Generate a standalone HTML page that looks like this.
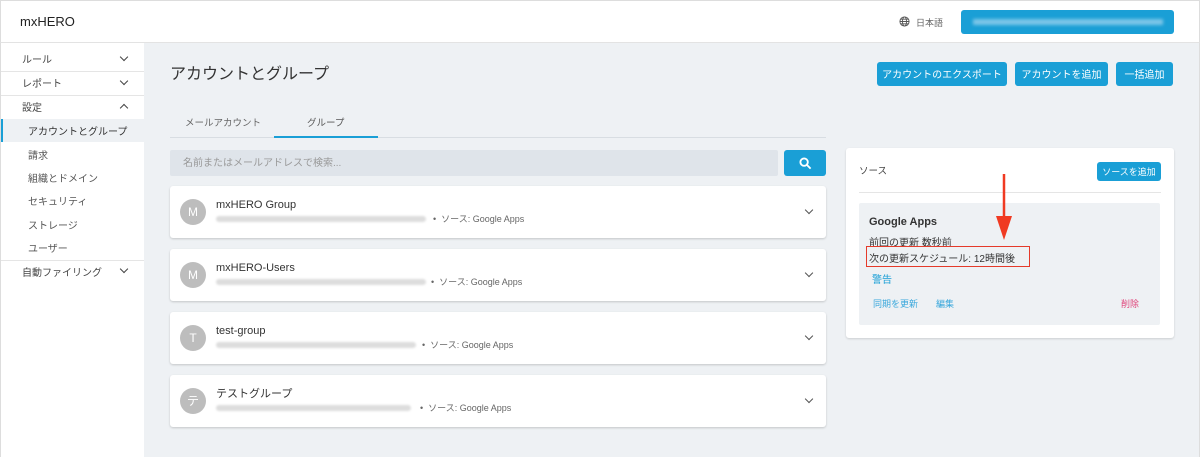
<!DOCTYPE html><html><head><meta charset="utf-8"><style>
*{box-sizing:border-box;margin:0;padding:0}
body{width:1200px;height:457px;overflow:hidden;font-family:"Liberation Sans","Noto Sans CJK JP",sans-serif;background:#fff;position:relative;color:#333}
.abs{position:absolute}
.hdr{left:0;top:0;width:1200px;height:43px;border:1px solid #ddd;border-bottom:1px solid #e3e3e3;background:#fff}
.side{left:0;top:43px;width:144px;height:414px;background:#fff;border-left:1px solid #ddd}
.main{left:144px;top:43px;width:1056px;height:414px;background:#eef1f4;border-right:1px solid #ddd}
.si{position:absolute;left:21px;font-size:10px;color:#444;line-height:12px}
.sub{position:absolute;left:27px;font-size:10px;color:#555;line-height:12px}
.chev{position:absolute;left:120px;width:6px;height:6px;border-right:1.5px solid #444;border-bottom:1.5px solid #444;transform:rotate(45deg)}
.sep{position:absolute;left:0;width:144px;height:1px;background:#e5e5e5}
.btn{position:absolute;background:#1a9fd6;color:#fff;font-size:10px;border-radius:3px;display:flex;align-items:center;justify-content:center;line-height:1;padding-top:3px}
.card{position:absolute;left:170px;width:656px;height:52px;background:#fff;border-radius:3px;box-shadow:0 1px 2px rgba(0,0,0,.18)}
.av{position:absolute;left:10px;top:13px;width:26px;height:26px;border-radius:50%;background:#bdbdbd;color:#fff;font-size:12px;text-align:center;line-height:26px}
.nm{position:absolute;left:46px;top:12px;font-size:11px;color:#333;line-height:14px}
.bl{position:absolute;left:46px;top:30px;height:6px;background:#ddd;border-radius:3px;filter:blur(1px)}
.src{position:absolute;top:27px;font-size:9px;color:#666;line-height:12px}
.cc{position:absolute;left:636px;top:21px;width:6px;height:6px;border-right:1.5px solid #555;border-bottom:1.5px solid #555;transform:rotate(45deg)}
.t{line-height:12px}
</style></head><body>
<div class="abs hdr"><div class="abs" style="left:19px;top:13px;font-size:13px;color:#222;line-height:15px">mxHERO</div>
<svg class="abs" style="left:898px;top:15px" width="11" height="11" viewBox="0 0 12 12" fill="none" stroke="#555" stroke-width="1"><circle cx="6" cy="6" r="5"/><ellipse cx="6" cy="6" rx="2.2" ry="5"/><path d="M1 6h10M2 3.5h8M2 8.5h8"/></svg>
<div class="abs t" style="left:915px;top:16px;font-size:9px;color:#666">日本語</div>
<div class="abs" style="left:960px;top:9px;width:213px;height:24px;background:#1a9fd6;border-radius:3px"><div class="abs" style="left:12px;top:9px;width:190px;height:6px;background:#7cc6e8;filter:blur(1.5px)"></div></div></div>
<div class="abs side">
<div class="si" style="top:12px">ルール</div><div class="chev" style="top:11px"></div><div class="sep" style="top:28px"></div>
<div class="si" style="top:36px">レポート</div><div class="chev" style="top:35px"></div><div class="sep" style="top:52px"></div>
<div class="si" style="top:60px">設定</div><div class="chev" style="top:62px;transform:rotate(-135deg)"></div>
<div class="abs" style="left:0;top:76px;width:144px;height:23px;background:#eef1f4;border-left:2px solid #1a9fd6"></div>
<div class="sub" style="top:84px;color:#333">アカウントとグループ</div>
<div class="sub" style="top:108px">請求</div><div class="sub" style="top:131px">組織とドメイン</div><div class="sub" style="top:154px">セキュリティ</div><div class="sub" style="top:178px">ストレージ</div><div class="sub" style="top:201px">ユーザー</div>
<div class="sep" style="top:217px"></div>
<div class="si" style="top:225px">自動ファイリング</div><div class="chev" style="top:223px"></div></div>
<div class="abs main"></div>
<div class="abs" style="left:170px;top:65px;font-size:16px;color:#333;line-height:19px">アカウントとグループ</div>
<div class="btn" style="left:877px;top:62px;width:130px;height:24px">アカウントのエクスポート</div>
<div class="btn" style="left:1015px;top:62px;width:93px;height:24px">アカウントを追加</div>
<div class="btn" style="left:1116px;top:62px;width:57px;height:24px">一括追加</div>
<div class="abs t" style="left:185px;top:118px;font-size:9.5px;color:#666">メールアカウント</div>
<div class="abs t" style="left:307px;top:118px;font-size:9.5px;color:#555">グループ</div>
<div class="abs" style="left:170px;top:137px;width:656px;height:1px;background:#d8dde2"></div>
<div class="abs" style="left:274px;top:136px;width:104px;height:2px;background:#1a9fd6"></div>
<div class="abs" style="left:170px;top:150px;width:608px;height:26px;background:#dfe4ea;border-radius:2px"><div class="abs t" style="left:13px;top:8px;font-size:10px;color:#999">名前またはメールアドレスで検索...</div></div>
<div class="btn" style="left:784px;top:150px;width:42px;height:26px;padding-top:0"><svg width="13" height="13" viewBox="0 0 14 14" fill="none" stroke="#fff" stroke-width="2"><circle cx="5.5" cy="5.5" r="4"/><path d="M8.5 8.5l4 4"/></svg></div>
<div class="card" style="top:186px"><div class="av">M</div><div class="nm">mxHERO Group</div><div class="bl" style="width:210px"></div><div class="src" style="left:263px">•&nbsp; ソース: Google Apps</div><div class="cc"></div></div>
<div class="card" style="top:249px"><div class="av">M</div><div class="nm">mxHERO-Users</div><div class="bl" style="width:210px"></div><div class="src" style="left:261px">•&nbsp; ソース: Google Apps</div><div class="cc"></div></div>
<div class="card" style="top:312px"><div class="av">T</div><div class="nm">test-group</div><div class="bl" style="width:200px"></div><div class="src" style="left:252px">•&nbsp; ソース: Google Apps</div><div class="cc"></div></div>
<div class="card" style="top:375px"><div class="av">テ</div><div class="nm">テストグループ</div><div class="bl" style="width:195px"></div><div class="src" style="left:250px">•&nbsp; ソース: Google Apps</div><div class="cc"></div></div>
<div class="abs" style="left:846px;top:148px;width:328px;height:190px;background:#fff;border-radius:3px;box-shadow:0 1px 2px rgba(0,0,0,.15)">
<div class="abs t" style="left:13px;top:18px;font-size:9.5px;color:#444">ソース</div>
<div class="btn" style="left:251px;top:14px;width:64px;height:19px;font-size:9px;padding-top:2px">ソースを追加</div>
<div class="abs" style="left:13px;top:44px;width:302px;height:1px;background:#e5e5e5"></div>
<div class="abs" style="left:13px;top:55px;width:301px;height:122px;background:#eef1f4;border-radius:2px">
<div class="abs t" style="left:10px;top:13px;font-size:11px;font-weight:bold;color:#333">Google Apps</div>
<div class="abs t" style="left:10px;top:35px;font-size:10px;color:#333">前回の更新 数秒前</div>
<div class="abs t" style="left:10px;top:51px;font-size:10px;color:#333">次の更新スケジュール: 12時間後</div>
<div class="abs t" style="left:13px;top:72px;font-size:10px;color:#1a9fd6">警告</div>
<div class="abs t" style="left:14px;top:95px;font-size:9px;color:#3aa8dc">同期を更新</div>
<div class="abs t" style="left:77px;top:95px;font-size:9px;color:#3aa8dc">編集</div>
<div class="abs t" style="left:262px;top:95px;font-size:9px;color:#e0457b">削除</div></div></div>
<div class="abs" style="left:866px;top:246px;width:164px;height:21px;border:1.5px solid #e53a2a"></div>
<svg class="abs" style="left:993px;top:172px" width="22" height="72" viewBox="0 0 22 72"><path d="M11 2V50" stroke="#f03a22" stroke-width="2.5"/><path d="M3 44L11 68L19 44Z" fill="#f03a22"/></svg>
</body></html>
